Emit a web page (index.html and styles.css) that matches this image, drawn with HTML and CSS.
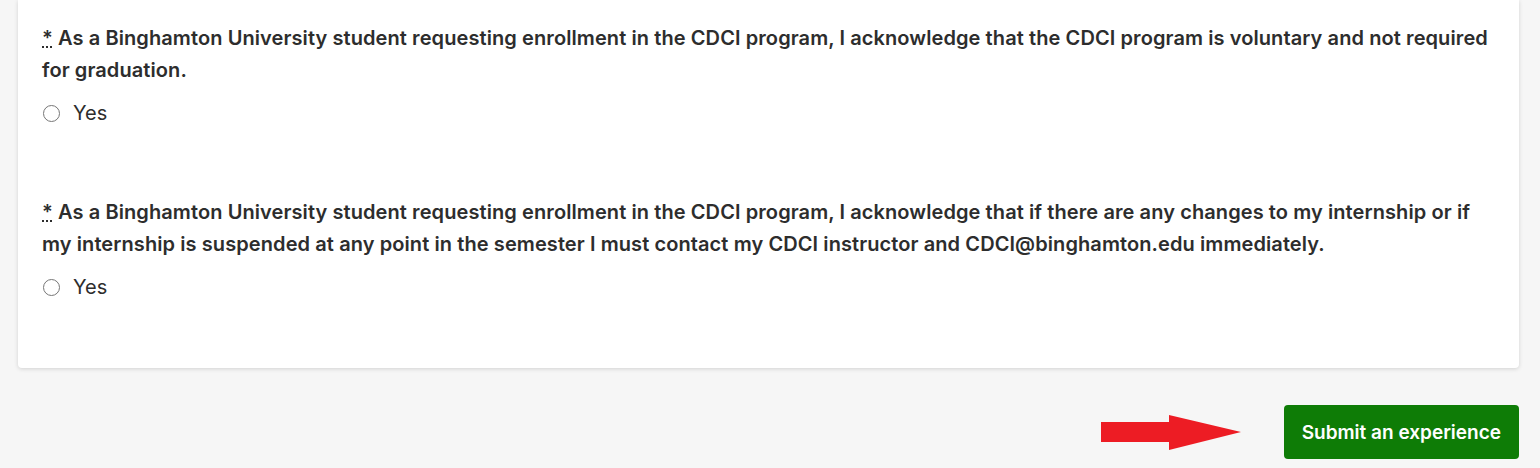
FILE: index.html
```html
<!DOCTYPE html>
<html lang="en">
<head>
    <meta charset="UTF-8">
    <title>CDCI Enrollment</title>
    <link rel="stylesheet" href="styles.css">
</head>
<body>
    <div class="card">
        <div class="question">
            <p class="prompt"><abbr title="Required">*</abbr> As a Binghamton University student requesting enrollment in the CDCI program, I acknowledge that the CDCI program is voluntary and not required for graduation.</p>
            <label class="option"><input type="radio" name="q1"> Yes</label>
        </div>

        <div class="question">
            <p class="prompt"><abbr title="Required">*</abbr> As a Binghamton University student requesting enrollment in the CDCI program, I acknowledge that if there are any changes to my internship or if my internship is suspended at any point in the semester I must contact my CDCI instructor and CDCI@binghamton.edu immediately.</p>
            <label class="option"><input type="radio" name="q2"> Yes</label>
        </div>
    </div>

    <div class="actions">
        <!-- arrow pointing at the submit button -->
        <svg class="arrow" width="140" height="36" viewBox="0 0 140 36">
            <path d="M0 7 H68 V0 L140 17 L68 35 V27 H0 Z" fill="#ed1c24"/>
        </svg>
        <button class="submit">Submit an experience</button>
    </div>
</body>
</html>
```

FILE: styles.css
```css
body {
    margin: 0;
    background-color: #f6f6f6;
    font-family: 'Inter', 'Liberation Sans', sans-serif;
    color: #2d2d2d;
}
.card {
    background-color: #ffffff;
    margin: 0 21px 0 18px;
    padding: 22px 24px 67px 24px;
    border-radius: 0 0 4px 4px;
    box-shadow: 0 1px 4px rgba(0, 0, 0, 0.15);
}
.question {
    margin-bottom: 69px;
}
.question:last-child {
    margin-bottom: 0;
}
.prompt {
    margin: 0 0 13px 0;
    font-size: 20px;
    font-weight: 600;
    line-height: 32px;
    letter-spacing: 0.09px;
}
.prompt abbr {
    text-decoration: underline dotted;
}
.option {
    display: flex;
    align-items: center;
    font-size: 20px;
    line-height: 28px;
}
.option input {
    width: 17px;
    height: 17px;
    margin: 0 13px 0 1px;
}
.actions {
    display: flex;
    justify-content: flex-end;
    align-items: center;
    margin: 37px 21px 0 0;
}
.arrow {
    margin-right: 43px;
    margin-top: 2px;
}
.submit {
    background-color: #0e7c06;
    color: #ffffff;
    border: none;
    border-radius: 4px;
    height: 54px;
    padding: 0 18px;
    font-family: 'Inter', 'Liberation Sans', sans-serif;
    font-size: 19px;
    font-weight: 600;
    cursor: pointer;
}
```
